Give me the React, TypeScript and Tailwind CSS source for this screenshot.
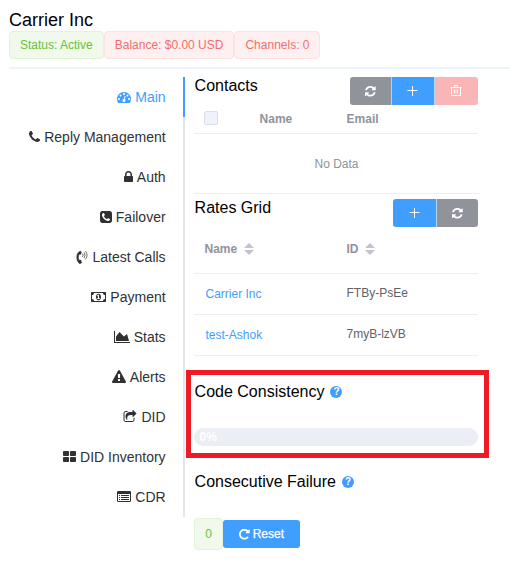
import type { ReactNode } from "react";

type IconProps = { d: string; w?: number; className?: string };

function Glyph({ d, w = 1792, className = "h-[14px]" }: IconProps) {
  return (
    <svg viewBox={`0 0 ${w} 1792`} fill="currentColor" className={`shrink-0 ${className}`}>
      <path d={d} />
    </svg>
  );
}

const DASHBOARD =
  "M384 1152q0-53-37.5-90.5t-90.5-37.5-90.5 37.5-37.5 90.5 37.5 90.5 90.5 37.5 90.5-37.5 37.5-90.5zm192-448q0-53-37.5-90.5t-90.5-37.5-90.5 37.5-37.5 90.5 37.5 90.5 90.5 37.5 90.5-37.5 37.5-90.5zm428 481l101-382q6-26-7.5-48.5t-38.5-29.5-48 6.5-30 39.5l-101 382q-60 5-107 43.5t-63 98.5q-20 77 20 146t117 89 146-20 89-117q16-60-6-117t-72-91zm660-33q0-53-37.5-90.5t-90.5-37.5-90.5 37.5-37.5 90.5 37.5 90.5 90.5 37.5 90.5-37.5 37.5-90.5zm-640-640q0-53-37.5-90.5t-90.5-37.5-90.5 37.5-37.5 90.5 37.5 90.5 90.5 37.5 90.5-37.5 37.5-90.5zm448 192q0-53-37.5-90.5t-90.5-37.5-90.5 37.5-37.5 90.5 37.5 90.5 90.5 37.5 90.5-37.5 37.5-90.5zm320 448q0 261-141 483-19 29-54 29h-1402q-35 0-54-29-141-221-141-483 0-182 71-348t191-286 286-191 348-71 348 71 286 191 191 286 71 348z";
const PHONE =
  "M1408 1240q0 27-10 70.5t-21 68.5q-21 50-122 106-94 51-186 51-27 0-53-3.5t-57.5-12.5-47-14.5-55.5-20.5-49-18q-98-35-175-83-127-79-264-216t-216-264q-48-77-83-175-3-9-18-49t-20.5-55.5-14.5-47-12.5-57.5-3.5-53q0-92 51-186 56-101 106-122 25-11 68.5-21t70.5-10q14 0 21 3 18 6 53 76 11 19 30 54t35 63.5 31 53.5q3 4 17.5 25t21.5 35.5 7 28.5q0 20-28.5 50t-62 55-62 53-28.5 46q0 9 5 22.5t8.5 20.5 14 24 11.5 19q76 137 174 235t235 174q2 1 19 11.5t24 14 20.5 8.5 22.5 5q18 0 46-28.5t53-62 55-62 50-28.5q14 0 28.5 7t35.5 21.5 25 17.5q25 15 53.5 31t63.5 35 54 30q70 35 76 53 3 7 3 21z";
const LOCK =
  "M320 768h512v-192q0-106-75-181t-181-75-181 75-75 181v192zm832 96v576q0 40-28 68t-68 28h-960q-40 0-68-28t-28-68v-576q0-40 28-68t68-28h32v-192q0-184 132-316t316-132 316 132 132 316v192h32q40 0 68 28t28 68z";
const PHONE_SQUARE =
  "M1280 1193q0-11-2-16t-18-16.5-40.5-25-47.5-26.5-45.5-25-28.5-15q-5-3-19-13t-25-15-21-5q-15 0-36.5 20.5t-39.5 45-38.5 45-33.5 20.5q-7 0-16.5-3.5t-15.5-6.5-17-9.5-14-8.5q-99-55-170-126.5t-127-170.5q-2-3-8.5-14t-9.5-17-6.5-15.5-3.5-16.5q0-13 20.5-33.5t45-38.5 45-39.5 20.5-36.5q0-10-5-21t-15-25-13-19q-3-6-15-28.5t-25-45.5-26.5-47.5-25-40.5-16.5-18-16-2q-48 0-101 22-46 21-80 94.5t-34 130.5q0 16 2.5 34t5 30.5 9 33 10 29.5 12.5 33 11 30q60 164 216.5 320.5t320.5 216.5q6 2 30 11t33 12.5 29.5 10 33 9 30.5 5 34 2.5q57 0 130.5-34t94.5-80q22-53 22-101zm256-777v960q0 119-84.5 203.5t-203.5 84.5h-960q-119 0-203.5-84.5t-84.5-203.5v-960q0-119 84.5-203.5t203.5-84.5h960q119 0 203.5 84.5t84.5 203.5z";
const MONEY =
  "M768 1152h384v-96h-128v-448h-114l-148 137 77 80q42-37 55-57h2v288h-128v96zm512-256q0 70-21 142t-59.5 134-101.5 101-138 39-138-39-101.5-101-59.5-134-21-142 21-142 59.5-134 101.5-101 138-39 138 39 101.5 101 59.5 134 21 142zm512 256v-512q-106 0-181-75t-75-181h-1152q0 106-75 181t-181 75v512q106 0 181 75t75 181h1152q0-106 75-181t181-75zm128-832v1152q0 26-19 45t-45 19h-1792q-26 0-45-19t-19-45v-1152q0-26 19-45t45-19h1792q26 0 45 19t19 45z";
const AREA = "M2048 1536v128h-2048v-1536h128v1408h1920zm-384-1024l256 896h-1664v-576l448-576 576 576z";
const WARNING =
  "M1024 1375v-190q0-14-9.5-23.5t-22.5-9.5h-192q-13 0-22.5 9.5t-9.5 23.5v190q0 14 9.5 23.5t22.5 9.5h192q13 0 22.5-9.5t9.5-23.5zm-2-374l18-459q0-12-10-19-13-11-24-11h-220q-11 0-24 11-10 7-10 21l17 457q0 10 10 16.5t24 6.5h185q14 0 23.5-6.5t10.5-16.5zm-14-934l768 1408q35 63-2 126-17 29-46.5 46t-63.5 17h-1536q-34 0-63.5-17t-46.5-46q-37-63-2-126l768-1408q17-31 47-49t65-18 65 18 47 49z";
const SHARE =
  "M1472 989v259q0 119-84.5 203.5t-203.5 84.5h-832q-119 0-203.5-84.5t-84.5-203.5v-832q0-119 84.5-203.5t203.5-84.5h255q13 0 22.5 9.5t9.5 22.5q0 27-26 32-77 26-133 60-10 4-16 4h-112q-66 0-113 47t-47 113v832q0 66 47 113t113 47h832q66 0 113-47t47-113v-214q0-19 18-29 28-13 54-37 16-16 35-8 21 9 21 31zm237-496l-384 384q-18 19-45 19-12 0-25-5-39-17-39-59v-192h-160q-323 0-438 131-119 137-74 473 3 23-20 34-8 2-12 2-16 0-26-13-10-14-21-31t-39.5-68.5-49.5-99.5-38.5-114-17.5-122q0-49 3.5-91t14-90 28-88 47-81.5 68.5-74 94.5-61.5 124.5-48.5 159.5-30.5 196.5-11h160v-192q0-42 39-59 13-5 25-5 26 0 45 19l384 384q19 19 19 45t-19 45z";
const TH_LARGE =
  "M768 1024v384q0 52-38 90t-90 38h-512q-52 0-90-38t-38-90v-384q0-52 38-90t90-38h512q52 0 90 38t38 90zm0-768v384q0 52-38 90t-90 38h-512q-52 0-90-38t-38-90v-384q0-52 38-90t90-38h512q52 0 90 38t38 90zm896 768v384q0 52-38 90t-90 38h-512q-52 0-90-38t-38-90v-384q0-52 38-90t90-38h512q52 0 90 38t38 90zm0-768v384q0 52-38 90t-90 38h-512q-52 0-90-38t-38-90v-384q0-52 38-90t90-38h512q52 0 90 38t38 90z";
const REFRESH =
  "M1511 1056q0 5-1 7-64 268-268 434.5t-478 166.5q-146 0-282.5-55t-243.5-157l-129 129q-19 19-45 19t-45-19-19-45v-448q0-26 19-45t45-19h448q26 0 45 19t19 45-19 45l-137 137q71 66 161 102t187 36q134 0 250-65t186-179q11-17 53-117 8-23 30-23h192q13 0 22.5 9.5t9.5 22.5zm25-800v448q0 26-19 45t-45 19h-448q-26 0-45-19t-19-45 19-45l138-138q-148-137-349-137-134 0-250 65t-186 179q-11 17-53 117-8 23-30 23h-199q-13 0-22.5-9.5t-9.5-22.5v-7q65-268 270-434.5t480-166.5q146 0 284 55.5t245 156.5l130-129q19-19 45-19t45 19 19 45z";
const REPEAT =
  "M1536 256v448q0 26-19 45t-45 19h-448q-42 0-59-40-17-39 14-69l138-138q-148-137-349-137-104 0-198.5 40.5t-163.5 109.5-109.5 163.5-40.5 198.5 40.5 198.5 109.5 163.5 163.5 109.5 198.5 40.5q119 0 225-52t179-147q7-10 23-12 15 0 25 9l137 138q9 8 9.5 20.5t-7.5 22.5q-109 132-264 204.5t-327 72.5q-156 0-298-61t-245-164-164-245-61-298 61-298 164-245 245-164 298-61q147 0 284.5 55.5t244.5 156.5l130-129q29-31 70-14 39 17 39 59z";
const LIST_ALT =
  "M160 128h1472a160 160 0 0 1 160 160v1088a160 160 0 0 1-160 160h-1472a160 160 0 0 1-160-160v-1088a160 160 0 0 1 160-160zM128 544v832q0 32 32 32h1472q32 0 32-32v-832q0-32-32-32h-1472q-32 0-32 32zM256 640h128v128h-128zM512 640h1024v128h-1024zM256 896h128v128h-128zM512 896h1024v128h-1024zM256 1152h128v128h-128zM512 1152h1024v128h-1024z";

function ListAlt() {
  return (
    <svg viewBox="0 0 1792 1792" fill="currentColor" fillRule="evenodd" className="h-[14px] shrink-0">
      <path d={LIST_ALT} />
    </svg>
  );
}

function RingingPhone() {
  return (
    <svg viewBox="0 0 12 14" fill="none" stroke="currentColor" className="h-[14px] w-3 shrink-0">
      <path
        d="M3.6 1.5C1.8 2.2.8 4.4.8 7.2s1 5.200 2.600 6.200c.4.3.9.3 1.200.1l.7-.4c.3-.2.4-.4.3-.7l-.7-2c-.1-.3-.4-.5-.7-.4l-1 .2C2.700 9.400 2.400 8.400 2.400 7.300s.3-2 .7-3l1.100.100c.3 0 .6-.2.7-.5l.3-2c0-.3-.1-.5-.4-.6-.4-.1-.9 0-1.200.200z"
        fill="currentColor"
        strokeWidth=".5"
      />
      <path d="M6.700 3.900q1 1.200 0 2.700M8.200 2.600q1.900 2.400 0 5.200M9.700 1.300q2.900 3.800 0 7.800" strokeWidth=".7" strokeLinecap="round" />
    </svg>
  );
}

function Plus() {
  return (
    <svg viewBox="0 0 12 12" className="size-3" stroke="currentColor">
      <path d="M5.500 1v10M.5 5.500h10" strokeWidth="1" />
    </svg>
  );
}

function Trash() {
  return (
    <svg viewBox="0 0 12 12" className="mr-0.5 size-3" fill="none" stroke="currentColor" strokeWidth="1">
      <path d="M.5 2.500h11M4.500 2.500v-2h3v2M1.500 2.500v8h9v-8M4.500 4.500v4M7.500 4.500v4" />
      <path d="M6 4.500v4" strokeWidth=".6" />
    </svg>
  );
}

function Help() {
  return (
    <span className="flex size-3 items-center justify-center rounded-full bg-[#409eff] text-[10px] leading-3 font-bold text-white">
      ?
    </span>
  );
}

function Sort() {
  return (
    <svg viewBox="0 0 10 12" className="ml-[6.5px] h-3 w-2.5" fill="#c0c4cc">
      <path d="M5 0l5 5H0zM5 12l5-5H0z" />
    </svg>
  );
}

const nav: { label: string; icon: ReactNode }[] = [
  { label: "Main", icon: <Glyph d={DASHBOARD} /> },
  { label: "Reply Management", icon: <Glyph d={PHONE} w={1408} /> },
  { label: "Auth", icon: <Glyph d={LOCK} w={1152} /> },
  { label: "Failover", icon: <Glyph d={PHONE_SQUARE} w={1536} /> },
  { label: "Latest Calls", icon: <RingingPhone /> },
  { label: "Payment", icon: <Glyph d={MONEY} w={1920} /> },
  { label: "Stats", icon: <Glyph d={AREA} w={2048} /> },
  { label: "Alerts", icon: <Glyph d={WARNING} /> },
  { label: "DID", icon: <Glyph d={SHARE} /> },
  { label: "DID Inventory", icon: <Glyph d={TH_LARGE} w={1664} /> },
  { label: "CDR", icon: <ListAlt /> },
];

const rates = [
  { name: "Carrier Inc", id: "FTBy-PsEe" },
  { name: "test-Ashok", id: "7myB-lzVB" },
];

function Tag({ tone, children }: { tone: "green" | "red"; children: ReactNode }) {
  const color =
    tone === "green" ? "border-[#e1f3d8] bg-[#f0f9eb] text-[#67c23a]" : "border-[#fde2e2] bg-[#fef0f0] text-[#f56c6c]";
  return <span className={`h-7 rounded border px-2.5 leading-[26px] ${color}`}>{children}</span>;
}

export default function App() {
  return (
    <div className="h-[567px] w-[510px] overflow-hidden bg-white pl-[9px] font-['Liberation_Sans',Arial,sans-serif] text-xs text-[#606266]">
      <header className="h-[69px] border-b-2 border-[#ecf5ff] pt-[9px]">
        <h1 className="h-[22px] text-[18px] leading-[22px] text-black">Carrier Inc</h1>
        <div className="flex">
          <Tag tone="green">Status: Active</Tag>
          <Tag tone="red">Balance: $0.00 USD</Tag>
          <Tag tone="red">Channels: 0</Tag>
        </div>
      </header>

      <div className="flex pt-2">
        <nav className="h-[440px] w-[176px] shrink-0 text-sm text-[#303133]">
          {nav.map((item, i) => (
            <div
              key={item.label}
              className={`flex h-10 items-center justify-end gap-1 border-r-2 pr-[17.4px] ${
                i === 0 ? "border-[#409eff] text-[#409eff]" : "border-[#e4e7ed]"
              }`}
            >
              {item.icon}
              <span>{item.label}</span>
            </div>
          ))}
        </nav>

        <main className="ml-[9px] w-[284px]">
          <section className="h-[117px] border-b border-[#ebeef5]">
            <div className="flex h-7 justify-between">
              <h2 className="pl-[0.6px] text-base leading-[18px] text-black">Contacts</h2>
              <div className="flex overflow-hidden rounded-[3px] text-white">
                <button className="flex w-[42px] items-center justify-center border-r border-[#c8c9cc] bg-[#909399]">
                  <Glyph d={REFRESH} w={1536} className="h-[12.5px]" />
                </button>
                <button className="flex w-[43px] items-center justify-center border-r border-[#b3d8ff] bg-[#409eff]">
                  <Plus />
                </button>
                <button className="flex w-[43px] items-center justify-center bg-[#fab6b6]">
                  <Trash />
                </button>
              </div>
            </div>
            <div className="flex h-[29px] items-center border-b border-[#ebeef5] font-bold text-[#909399]">
              <div className="flex w-[65.6px] pl-2.5">
                <span className="mb-[2px] size-3.5 rounded-[2px] border border-[#dcdfe6] bg-[#edf2fc]" />
              </div>
              <span className="w-[87px]">Name</span>
              <span>Email</span>
            </div>
            <div className="pl-px text-center leading-[60px] text-[#909399]">No Data</div>
          </section>

          <section className="pt-[5px]">
            <div className="flex h-7 justify-between">
              <h2 className="pl-[0.6px] text-base leading-[18px] text-black">Rates Grid</h2>
              <div className="flex overflow-hidden rounded-[3px] text-white">
                <button className="flex w-[44px] items-center justify-center border-r border-[#b3d8ff] bg-[#409eff]">
                  <Plus />
                </button>
                <button className="flex w-[41px] items-center justify-center bg-[#909399]">
                  <Glyph d={REFRESH} w={1536} className="h-[12.5px]" />
                </button>
              </div>
            </div>
            <div className="flex h-[47px] items-center border-b border-[#ebeef5] pb-[3px] pl-[10.5px] font-bold text-[#909399]">
              <span className="flex w-[142px] items-center">
                Name <Sort />
              </span>
              <span className="flex items-center">
                ID <Sort />
              </span>
            </div>
            {rates.map((r) => (
              <div key={r.id} className="flex h-[41px] items-center border-b border-[#ebeef5] pl-[11.5px]">
                <a className="w-[141px] text-[#409eff]">{r.name}</a>
                <span className="pb-[2px]">{r.id}</span>
              </div>
            ))}
          </section>

          <section className="relative h-[101px] pt-[27px]">
            <div className="absolute -left-2 top-[14px] h-[88px] w-[303px] border-5 border-[#ed1c24]" />
            <h2 className="flex h-[18px] items-center gap-1.5 pl-[0.6px] text-base leading-[18px] text-black">
              Code Consistency <Help />
            </h2>
            <div className="mt-[27px] h-[18px] rounded-full bg-[#ebeef5] pl-[5.5px] leading-[18px] font-bold text-white">0%</div>
          </section>

          <section className="pt-4">
            <h2 className="flex h-[18px] items-center gap-1.5 pl-[0.6px] text-base leading-[18px] text-black">
              Consecutive Failure <Help />
            </h2>
            <div className="mt-[27px] flex items-center">
              <span className="w-[29px] rounded border border-[#e1f3d8] bg-[#f0f9eb] text-center leading-[30px] text-[#67c23a]">0</span>
              <button className="flex h-7 w-[77px] items-center justify-center gap-[3px] rounded-[3px] bg-[#409eff] text-white [-webkit-text-stroke:0.25px_white]">
                <Glyph d={REPEAT} w={1536} className="h-[12.5px]" />
                Reset
              </button>
            </div>
          </section>
        </main>
      </div>
    </div>
  );
}
